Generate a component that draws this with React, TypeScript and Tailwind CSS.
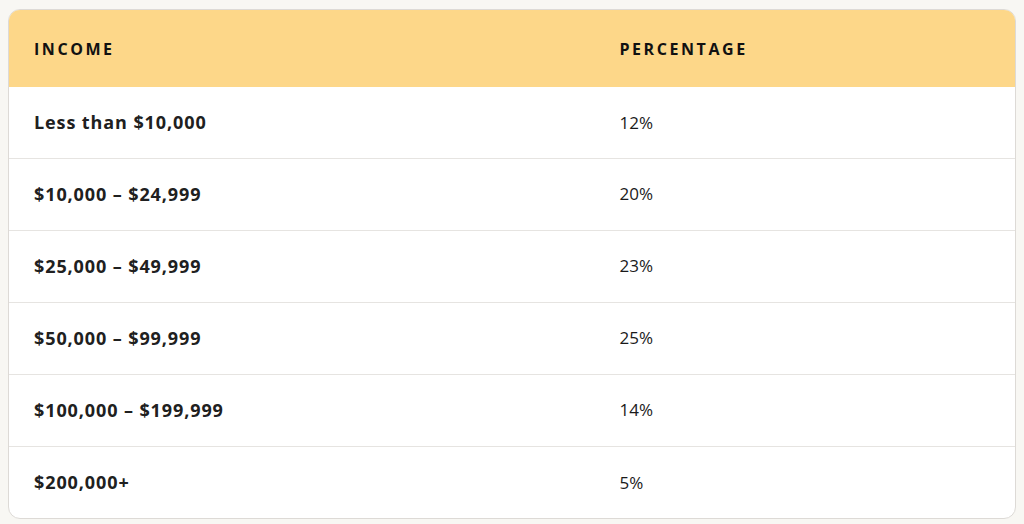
const rows = [
  { income: "Less than $10,000", pct: "12%" },
  { income: "$10,000 – $24,999", pct: "20%" },
  { income: "$25,000 – $49,999", pct: "23%" },
  { income: "$50,000 – $99,999", pct: "25%" },
  { income: "$100,000 – $199,999", pct: "14%" },
  { income: "$200,000+", pct: "5%" },
];

export default function App() {
  return (
    <div className="min-h-[524px] bg-[#f8f7f3] px-2 pt-[9px] pb-[7px] font-['Open_Sans',sans-serif] text-[#202020]">
      <div className="overflow-hidden rounded-xl border border-[#dddad6] bg-white">
        <table className="w-full border-collapse text-left">
          <thead>
            <tr className="h-[77px] bg-[#fdd789] text-[#111]">
              <th className="w-[58%] pl-[25px] text-[16px] font-bold tracking-[0.16em] uppercase">Income</th>
              <th className="pl-[27px] text-[16px] font-bold tracking-[0.16em] uppercase">Percentage</th>
            </tr>
          </thead>
          <tbody>
            {rows.map((r, i) => (
              <tr key={r.income} className={i > 0 ? "h-[72px] border-t border-[#e6e4e1]" : "h-[71px]"}>
                <td className="pl-[25px] text-[18px] font-bold tracking-[0.05em]">{r.income}</td>
                <td className="pl-[27px] text-[17px] font-normal text-[#1a1a1a]">{r.pct}</td>
              </tr>
            ))}
          </tbody>
        </table>
      </div>
    </div>
  );
}
